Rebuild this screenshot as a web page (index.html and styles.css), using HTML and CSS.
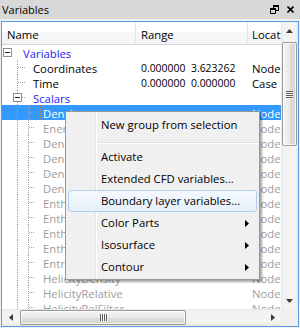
FILE: index.html
```html
<!DOCTYPE html>
<html>
<head>
<meta charset="utf-8">
<title>Variables</title>
<link rel="stylesheet" href="styles.css">
</head>
<body>
<div class="dock">
  <div class="title">
    <span class="title-text">Variables</span>
    <span class="title-btns">
      <svg class="ico-float" width="9" height="9" viewBox="0 0 9 9">
        <rect x="3" y="0" width="6" height="2" fill="#000"/>
        <path d="M8.5 2V5.5H6M3.5 2V3" fill="none" stroke="#000"/>
        <rect x="0" y="3" width="6" height="2" fill="#000"/>
        <path d="M0.5 5V8.5H5.5V5" fill="none" stroke="#000"/>
      </svg>
      <svg class="ico-close" width="7" height="7" viewBox="0 0 7 7">
        <path d="M0.5 0.5L6.5 6.5M6.5 0.5L0.5 6.5" stroke="#000" stroke-width="1.6"/>
      </svg>
    </span>
  </div>
  <div class="tree">
    <div class="upper">
      <div class="view">
        <div class="header">
          <div class="hcell c-name">Name</div>
          <div class="hcell c-range">Range</div>
          <div class="hcell c-loc">Location</div>
        </div>
        <div class="rows">
          <div class="row">
            <div class="cell c-name"><svg class="br" width="21" height="15"><rect class="bx" x="1.5" y="3.5" width="8" height="8"/><path class="mn" d="M3 7.5H8"/></svg><span class="lbl group">Variables</span></div>
            <div class="cell c-range"></div>
            <div class="cell c-loc"></div>
          </div>
          <div class="row">
            <div class="cell c-name"><svg class="br" width="31" height="15"><path class="d" d="M15.5 0V15M16 7.5H24"/></svg><span class="lbl">Coordinates</span></div>
            <div class="cell c-range"><span class="num vmin">0.000000</span><span class="num">3.623262</span></div>
            <div class="cell c-loc">Node</div>
          </div>
          <div class="row">
            <div class="cell c-name"><svg class="br" width="31" height="15"><path class="d" d="M15.5 0V15M16 7.5H24"/></svg><span class="lbl">Time</span></div>
            <div class="cell c-range"><span class="num vmin">0.000000</span><span class="num">0.000000</span></div>
            <div class="cell c-loc">Case</div>
          </div>
          <div class="row">
            <div class="cell c-name"><svg class="br" width="31" height="15"><path class="d" d="M15.5 0V15M20 7.5H24"/><rect class="bx" x="11.5" y="3.5" width="8" height="8"/><path class="mn" d="M13 7.5H18"/></svg><span class="lbl group">Scalars</span></div>
            <div class="cell c-range"></div>
            <div class="cell c-loc"></div>
          </div>
          <div class="row selected">
            <div class="cell c-name"><svg class="br" width="38" height="15"><path class="d" d="M15.5 0V15M26.5 0V15M27 7.5H32"/></svg><span class="lbl focus">Density</span></div>
            <div class="cell c-range"></div>
            <div class="cell c-loc">Node</div>
          </div>
          <div class="row off">
            <div class="cell c-name"><svg class="br" width="41" height="15"><path class="d" d="M15.5 0V15M26.5 0V15M27 7.5H32"/></svg><span class="lbl">Energy</span></div>
            <div class="cell c-range"></div>
            <div class="cell c-loc">Node</div>
          </div>
          <div class="row off">
            <div class="cell c-name"><svg class="br" width="41" height="15"><path class="d" d="M15.5 0V15M26.5 0V15M27 7.5H32"/></svg><span class="lbl">DensityLogNorm</span></div>
            <div class="cell c-range"></div>
            <div class="cell c-loc">Node</div>
          </div>
          <div class="row off">
            <div class="cell c-name"><svg class="br" width="41" height="15"><path class="d" d="M15.5 0V15M26.5 0V15M27 7.5H32"/></svg><span class="lbl">DensityNorm</span></div>
            <div class="cell c-range"></div>
            <div class="cell c-loc">Node</div>
          </div>
          <div class="row off">
            <div class="cell c-name"><svg class="br" width="41" height="15"><path class="d" d="M15.5 0V15M26.5 0V15M27 7.5H32"/></svg><span class="lbl">DensityStag</span></div>
            <div class="cell c-range"></div>
            <div class="cell c-loc">Node</div>
          </div>
          <div class="row off">
            <div class="cell c-name"><svg class="br" width="41" height="15"><path class="d" d="M15.5 0V15M26.5 0V15M27 7.5H32"/></svg><span class="lbl">DensityStagNorm</span></div>
            <div class="cell c-range"></div>
            <div class="cell c-loc">Node</div>
          </div>
          <div class="row off">
            <div class="cell c-name"><svg class="br" width="41" height="15"><path class="d" d="M15.5 0V15M26.5 0V15M27 7.5H32"/></svg><span class="lbl">Enthalpy</span></div>
            <div class="cell c-range"></div>
            <div class="cell c-loc">Node</div>
          </div>
          <div class="row off">
            <div class="cell c-name"><svg class="br" width="41" height="15"><path class="d" d="M15.5 0V15M26.5 0V15M27 7.5H32"/></svg><span class="lbl">EnthalpyNorm</span></div>
            <div class="cell c-range"></div>
            <div class="cell c-loc">Node</div>
          </div>
          <div class="row off">
            <div class="cell c-name"><svg class="br" width="41" height="15"><path class="d" d="M15.5 0V15M26.5 0V15M27 7.5H32"/></svg><span class="lbl">EnthalpyStag</span></div>
            <div class="cell c-range"></div>
            <div class="cell c-loc">Node</div>
          </div>
          <div class="row off">
            <div class="cell c-name"><svg class="br" width="41" height="15"><path class="d" d="M15.5 0V15M26.5 0V15M27 7.5H32"/></svg><span class="lbl">EnthalpyStagNorm</span></div>
            <div class="cell c-range"></div>
            <div class="cell c-loc">Node</div>
          </div>
          <div class="row off">
            <div class="cell c-name"><svg class="br" width="41" height="15"><path class="d" d="M15.5 0V15M26.5 0V15M27 7.5H32"/></svg><span class="lbl">Entropy</span></div>
            <div class="cell c-range"></div>
            <div class="cell c-loc">Node</div>
          </div>
          <div class="row off">
            <div class="cell c-name"><svg class="br" width="41" height="15"><path class="d" d="M15.5 0V15M26.5 0V15M27 7.5H32"/></svg><span class="lbl">HelicityDensity</span></div>
            <div class="cell c-range"></div>
            <div class="cell c-loc">Node</div>
          </div>
          <div class="row off">
            <div class="cell c-name"><svg class="br" width="41" height="15"><path class="d" d="M15.5 0V15M26.5 0V15M27 7.5H32"/></svg><span class="lbl">HelicityRelative</span></div>
            <div class="cell c-range"></div>
            <div class="cell c-loc">Node</div>
          </div>
          <div class="row off">
            <div class="cell c-name"><svg class="br" width="41" height="15"><path class="d" d="M15.5 0V15M26.5 0V15M27 7.5H32"/></svg><span class="lbl">HelicityRelFilter</span></div>
            <div class="cell c-range"></div>
            <div class="cell c-loc">Node</div>
          </div>
        </div>
      </div>
      <div class="vscroll">
        <div class="sb-btn"><svg width="7" height="4" viewBox="0 0 7 4"><polygon points="0,4 3.5,0 7,4" fill="#3a3a3a"/></svg></div>
        <div class="vthumb"><span class="grip"></span><span class="grip"></span><span class="grip"></span><span class="grip"></span></div>
        <div class="sb-btn end"><svg width="7" height="4" viewBox="0 0 7 4"><polygon points="0,0 7,0 3.5,4" fill="#3a3a3a"/></svg></div>
      </div>
    </div>
    <div class="lower">
      <div class="hscroll">
        <div class="sb-btn h"><svg width="4" height="7" viewBox="0 0 4 7"><polygon points="4,0 4,7 0,3.5" fill="#3a3a3a"/></svg></div>
        <div class="hthumb"><span class="hgrip"></span><span class="hgrip"></span><span class="hgrip"></span><span class="hgrip"></span></div>
        <div class="sb-btn h end"><svg width="4" height="7" viewBox="0 0 4 7"><polygon points="0,0 4,3.5 0,7" fill="#3a3a3a"/></svg></div>
      </div>
      <div class="corner"></div>
    </div>
  </div>
</div>

<div class="menu">
  <div class="mi">New group from selection</div>
  <div class="msep"></div>
  <div class="mi">Activate</div>
  <div class="mi">Extended CFD variables...</div>
  <div class="mi hover">Boundary layer variables...</div>
  <div class="mi">Color Parts<svg class="arr" width="4" height="7" viewBox="0 0 4 7"><polygon points="0,0 4,3.5 0,7" fill="#000"/></svg></div>
  <div class="mi">Isosurface<svg class="arr" width="4" height="7" viewBox="0 0 4 7"><polygon points="0,0 4,3.5 0,7" fill="#000"/></svg></div>
  <div class="mi">Contour<svg class="arr" width="4" height="7" viewBox="0 0 4 7"><polygon points="0,0 4,3.5 0,7" fill="#000"/></svg></div>
</div>
</body>
</html>
```

FILE: styles.css
```css
* { box-sizing: border-box; }
html, body { margin: 0; padding: 0; }
body {
  width: 300px;
  height: 328px;
  overflow: hidden;
  position: relative;
  background: #f0f0f0;
  font-family: "Open Sans", "Noto Sans", sans-serif;
  font-size: 11.3px;
  color: #000;
}

.dock { display: flex; flex-direction: column; }

.title {
  height: 19px;
  background: #d8d8d8;
  display: flex;
  align-items: center;
  justify-content: space-between;
  padding: 0 6px 0 2px;
}
.title-text { font-size: 11px; line-height: 19px; }
.title-btns { display: flex; align-items: center; gap: 8px; }
.title-btns svg { display: block; }
.ico-float { margin-top: -1px; }

.tree {
  margin: 2px 0 0 1px;
  width: 298px;
  height: 306px;
  border: 1px solid #569de5;
  background: #fff;
  display: flex;
  flex-direction: column;
}
.upper { display: flex; height: 287px; }
.view {
  width: 279px;
  overflow: hidden;
  display: flex;
  flex-direction: column;
}

.header {
  display: flex;
  flex: none;
  height: 23px;
  background: linear-gradient(#ffffff 0, #ffffff 45%, #f7f8fa 46%, #f2f3f5 100%);
  border-bottom: 1px solid #d5d5d5;
}
.hcell {
  flex: none;
  line-height: 16px;
  padding: 5px 0 0 5px;
  white-space: nowrap;
  overflow: hidden;
  border-right: 1px solid #e3e6ea;
}
.c-name { width: 134px; flex: none; }
.c-range { width: 112px; flex: none; }
.c-loc { width: 70px; flex: none; }
.hcell.c-loc { padding-left: 4px; border-right: none; }

.rows { display: flex; flex-direction: column; }
.row {
  display: flex;
  height: 15px;
  flex: none;
  white-space: nowrap;
}
.cell { height: 15px; line-height: 17px; overflow: visible; display: flex; }
.cell.c-range { padding-left: 5px; }
.cell.c-loc { padding-left: 4px; }
.num { font-size: 10.4px; display: inline-block; }
.vmin { width: 50px; }
.br { display: block; flex: none; }
.br .d { fill: none; stroke: #a0a0a0; stroke-dasharray: 1 1; }
.br .bx { fill: #fff; stroke: #8e8f8f; }
.br .mn { stroke: #202020; fill: none; }
.lbl { display: block; }
.group { color: #2323f5; }

.row.selected { background: #3399ff; color: #fff; }
.lbl.focus {
  width: 94px;
  height: 15px;
  padding-left: 2px;
  border: 1px dotted #c77a3c;
  line-height: 15px;
}
.row.off { color: #9d9d9d; }

/* scrollbars */
.vscroll {
  width: 17px;
  flex: none;
  display: flex;
  flex-direction: column;
  background: linear-gradient(to right, #e6e6e6 0, #f2f2f2 2px, #f4f4f4 14px, #e6e6e6 17px);
}
.sb-btn {
  height: 17px;
  flex: none;
  display: flex;
  align-items: center;
  justify-content: center;
}
.sb-btn svg { display: block; }
.sb-btn.end { margin-top: auto; }
.vthumb {
  margin: 3px 0 0 1px;
  width: 15px;
  height: 104px;
  border: 1px solid #9a9a9a;
  border-radius: 2px;
  box-shadow: inset 0 0 0 1px rgba(255,255,255,0.8);
  background: linear-gradient(to right, #f4f4f4, #e9e9e9 50%, #dcdcdc 51%, #d6d6d6);
  display: flex;
  flex-direction: column;
  align-items: center;
  justify-content: center;
  gap: 1px;
}
.grip { width: 7px; height: 1px; background: #5c5c5c; box-shadow: 0 1px 0 #f8f8f8; }

.lower { display: flex; height: 17px; flex: none; }
.hscroll {
  width: 279px;
  flex: none;
  display: flex;
  align-items: center;
  background: linear-gradient(#e6e6e6 0, #f2f2f2 2px, #f4f4f4 14px, #e6e6e6 17px);
}
.sb-btn.h { width: 17px; height: 17px; }
.sb-btn.h.end { margin-top: 0; margin-left: auto; }
.hthumb {
  margin-left: 1px;
  width: 166px;
  height: 15px;
  border: 1px solid #9a9a9a;
  border-radius: 2px;
  box-shadow: inset 0 0 0 1px rgba(255,255,255,0.8);
  background: linear-gradient(#f4f4f4, #e9e9e9 50%, #dcdcdc 51%, #d6d6d6);
  display: flex;
  align-items: center;
  justify-content: center;
  gap: 1px;
}
.hgrip { width: 1px; height: 7px; background: #5c5c5c; box-shadow: 1px 0 0 #f8f8f8; }
.corner { width: 17px; flex: none; background: #f0f0f0; }

/* context menu */
.menu {
  position: absolute;
  left: 65px;
  top: 111px;
  width: 195px;
  height: 169px;
  border: 1px solid #979797;
  padding: 2px 2px 1px 2px;
  background: linear-gradient(to right, #f0f0f0 0, #f0f0f0 29px, #e2e3e3 29px, #e2e3e3 30px, #ffffff 30px, #ffffff 31px, #f0f0f0 31px);
  box-shadow: 2px 2px 2px rgba(0,0,0,0.35);
}
.mi {
  height: 22px;
  line-height: 22px;
  border: 1px solid transparent;
  border-radius: 3px;
  padding: 0 7px 0 32px;
  display: flex;
  align-items: center;
  justify-content: space-between;
  white-space: nowrap;
}
.mi.hover {
  border-color: #aecff0;
  background: linear-gradient(#f4f9fe, #e5effb);
}
.arr { display: block; }
.msep {
  height: 10px;
  margin-left: 29px;
  background: linear-gradient(transparent 0, transparent 6px, #e0e0e0 6px, #e0e0e0 7px, #ffffff 7px, #ffffff 8px, transparent 8px);
}
```
